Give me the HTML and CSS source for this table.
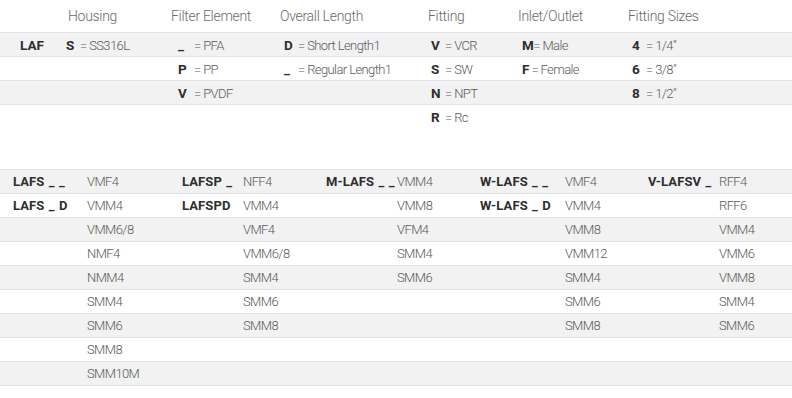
FILE: index.html
```html
<!DOCTYPE html>
<html>
<head>
<meta charset="utf-8">
<link rel="stylesheet" href="styles.css">
</head>
<body>
<div class="codes">
  <div class="row head">
    <div class="c"></div>
    <div class="c h1">Housing</div>
    <div class="c">Filter Element</div>
    <div class="c">Overall Length</div>
    <div class="c">Fitting</div>
    <div class="c">Inlet/Outlet</div>
    <div class="c">Fitting Sizes</div>
  </div>
  <div class="row alt">
    <div class="c lbl">LAF</div>
    <div class="c v0"><b class="k">S</b>= SS316L</div>
    <div class="c v1"><b class="k kf">_</b>= PFA</div>
    <div class="c v2"><b class="k">D</b>= Short Length1</div>
    <div class="c v3"><b class="k">V</b>= VCR</div>
    <div class="c v4"><b class="kn">M</b>= Male</div>
    <div class="c v5"><b class="k">4</b>= 1/4"</div>
  </div>
  <div class="row">
    <div class="c lbl"></div>
    <div class="c v0"></div>
    <div class="c v1"><b class="k kf">P</b>= PP</div>
    <div class="c v2"><b class="k">_</b>= Regular Length1</div>
    <div class="c v3"><b class="k">S</b>= SW</div>
    <div class="c v4"><b class="kn">F</b> = Female</div>
    <div class="c v5"><b class="k">6</b>= 3/8"</div>
  </div>
  <div class="row alt">
    <div class="c lbl"></div>
    <div class="c v0"></div>
    <div class="c v1"><b class="k kf">V</b>= PVDF</div>
    <div class="c v2"></div>
    <div class="c v3"><b class="k">N</b>= NPT</div>
    <div class="c v4"></div>
    <div class="c v5"><b class="k">8</b>= 1/2"</div>
  </div>
  <div class="row last">
    <div class="c lbl"></div>
    <div class="c v0"></div>
    <div class="c v1"></div>
    <div class="c v2"></div>
    <div class="c v3"><b class="k">R</b>= Rc</div>
    <div class="c v4"></div>
    <div class="c v5"></div>
  </div>
</div>

<div class="models">
  <div class="mrow alt"><b class="ml first">LAFS _ _</b><span>VMF4</span><b class="ml">LAFSP _</b><span>NFF4</span><b class="ml">M-LAFS _ _</b><span>VMM4</span><b class="ml">W-LAFS _ _</b><span>VMF4</span><b class="ml">V-LAFSV _</b><span>RFF4</span></div>
  <div class="mrow"><b class="ml first">LAFS _ D</b><span>VMM4</span><b class="ml">LAFSPD</b><span>VMM4</span><b class="ml"></b><span>VMM8</span><b class="ml">W-LAFS _ D</b><span>VMM4</span><b class="ml"></b><span>RFF6</span></div>
  <div class="mrow alt"><b class="ml first"></b><span>VMM6/8</span><b class="ml"></b><span>VMF4</span><b class="ml"></b><span>VFM4</span><b class="ml"></b><span>VMM8</span><b class="ml"></b><span>VMM4</span></div>
  <div class="mrow"><b class="ml first"></b><span>NMF4</span><b class="ml"></b><span>VMM6/8</span><b class="ml"></b><span>SMM4</span><b class="ml"></b><span>VMM12</span><b class="ml"></b><span>VMM6</span></div>
  <div class="mrow alt"><b class="ml first"></b><span>NMM4</span><b class="ml"></b><span>SMM4</span><b class="ml"></b><span>SMM6</span><b class="ml"></b><span>SMM4</span><b class="ml"></b><span>VMM8</span></div>
  <div class="mrow"><b class="ml first"></b><span>SMM4</span><b class="ml"></b><span>SMM6</span><b class="ml"></b><span></span><b class="ml"></b><span>SMM6</span><b class="ml"></b><span>SMM4</span></div>
  <div class="mrow alt"><b class="ml first"></b><span>SMM6</span><b class="ml"></b><span>SMM8</span><b class="ml"></b><span></span><b class="ml"></b><span>SMM8</span><b class="ml"></b><span>SMM6</span></div>
  <div class="mrow"><b class="ml first"></b><span>SMM8</span><b class="ml"></b><span></span><b class="ml"></b><span></span><b class="ml"></b><span></span><b class="ml"></b><span></span></div>
  <div class="mrow alt"><b class="ml first"></b><span>SMM10M</span><b class="ml"></b><span></span><b class="ml"></b><span></span><b class="ml"></b><span></span><b class="ml"></b><span></span></div>
</div>
</body>
</html>
```
FILE: styles.css
```css
html, body {
  margin: 0;
  padding: 0;
  background: #fff;
}
body {
  font-family: Roboto, "Liberation Sans", sans-serif;
  font-weight: 300;
  font-size: 13px;
  color: #5a5a5a;
  letter-spacing: -0.6px;
}
.codes {
  width: 792px;
}
.row {
  display: grid;
  grid-template-columns: 66px 105px 109px 148px 90px 110px 1fr;
  height: 23px;
  align-items: center;
  border-bottom: 1px solid #e0e3e3;
  white-space: nowrap;
}
.row.head {
  height: 32px;
  font-size: 14px;
  color: #6a6a6a;
  letter-spacing: -0.3px;
}
.row.head .h1 { padding-left: 2px; }
.row.last { border-bottom: none; height: 24px; }
.alt { background: #f2f2f2; }
.lbl {
  padding-left: 20px;
  font-weight: 700;
  font-size: 13.5px;
  color: #2e2e2e;
  letter-spacing: 0;
}
.k {
  display: inline-block;
  width: 14px;
  font-weight: 700;
  font-size: 13.5px;
  color: #2e2e2e;
}
.kf { width: 16px; }
.kn {
  font-weight: 700;
  font-size: 13.5px;
  color: #2e2e2e;
}
.v1 { padding-left: 7px; }
.v2 { padding-left: 4px; }
.v3 { padding-left: 3px; }
.v4 { padding-left: 4px; }
.v5 { padding-left: 4px; }

.models {
  margin-top: 40px;
  border-top: 1px solid #e0e3e3;
  width: 792px;
}
.mrow {
  display: grid;
  grid-template-columns: 87px 95px 61px 83px 71px 83px 85px 83px 71px 73px;
  height: 23px;
  align-items: center;
  border-bottom: 1px solid #e0e3e3;
  white-space: nowrap;
}
.ml {
  font-weight: 700;
  font-size: 13px;
  color: #2e2e2e;
  letter-spacing: 0.1px;
  word-spacing: 1px;
}
.ml.first { padding-left: 13px; }
```
